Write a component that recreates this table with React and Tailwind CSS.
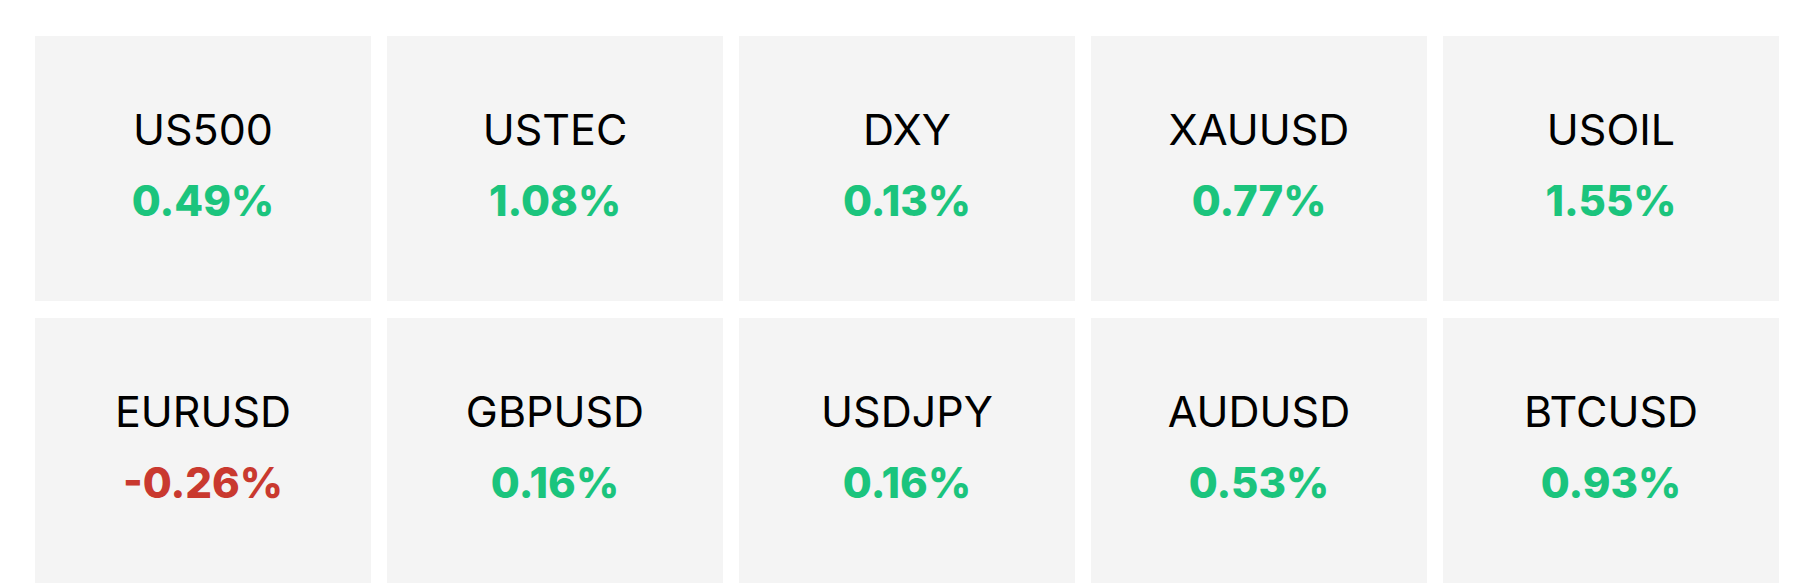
import React from 'react'

const quotes = [
    { symbol: 'US500', change: 0.49 },
    { symbol: 'USTEC', change: 1.08 },
    { symbol: 'DXY', change: 0.13 },
    { symbol: 'XAUUSD', change: 0.77 },
    { symbol: 'USOIL', change: 1.55 },
    { symbol: 'EURUSD', change: -0.26 },
    { symbol: 'GBPUSD', change: 0.16 },
    { symbol: 'USDJPY', change: 0.16 },
    { symbol: 'AUDUSD', change: 0.53 },
    { symbol: 'BTCUSD', change: 0.93 },
]

function QuoteCard({ symbol, change }) {
    const up = change >= 0
    return (
        <div className="flex flex-col items-center justify-center h-[265px] bg-[#f4f4f4] pb-2">
            <span className="text-[43px] leading-[50px] text-black font-normal">
                {symbol}
            </span>
            <span className={`mt-[22px] text-[42px] leading-[50px] font-extrabold ${up ? 'text-[#1bc47d]' : 'text-[#c9392f]'}`}>
                {up ? '' : '-'}{Math.abs(change).toFixed(2)}%
            </span>
        </div>
    )
}

export default function App() {
    return (
        <div className="min-h-screen bg-white pl-[35px] pr-[41px] pt-[36px] font-['Inter',sans-serif]">
            <div className="grid grid-cols-5 gap-x-4 gap-y-[17px]">
                {quotes.map(q => (
                    <QuoteCard key={q.symbol} {...q} />
                ))}
            </div>
        </div>
    )
}
